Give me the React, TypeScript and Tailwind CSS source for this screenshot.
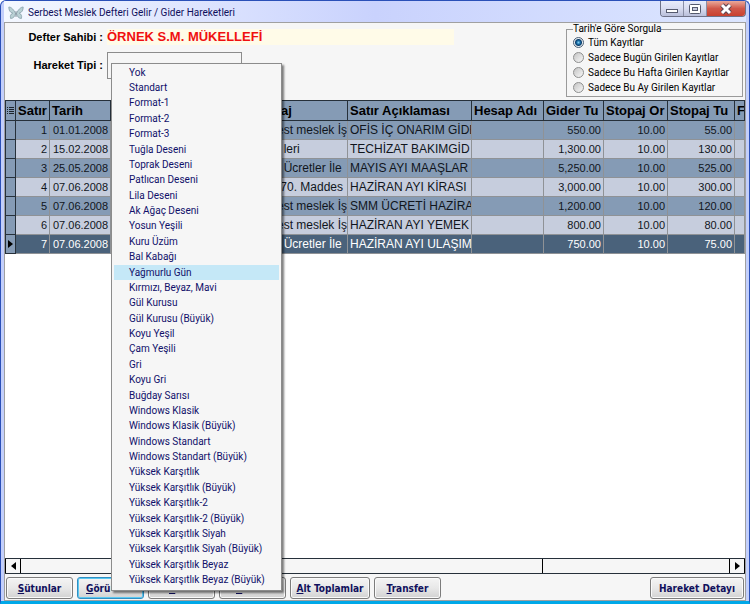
import { ReactNode } from 'react';
import clsx from 'clsx';

const themes = [
  'Yok', 'Standart', 'Format-1', 'Format-2', 'Format-3', 'Tuğla Deseni', 'Toprak Deseni', 'Patlıcan Deseni',
  'Lila Deseni', 'Ak Ağaç Deseni', 'Yosun Yeşili', 'Kuru Üzüm', 'Bal Kabağı', 'Yağmurlu Gün',
  'Kırmızı, Beyaz, Mavi', 'Gül Kurusu', 'Gül Kurusu (Büyük)', 'Koyu Yeşil', 'Çam Yeşili', 'Gri', 'Koyu Gri',
  'Buğday Sarısı', 'Windows Klasik', 'Windows Klasik (Büyük)', 'Windows Standart', 'Windows Standart (Büyük)',
  'Yüksek Karşıtlık', 'Yüksek Karşıtlık (Büyük)', 'Yüksek Karşıtlık-2', 'Yüksek Karşıtlık-2 (Büyük)',
  'Yüksek Karşıtlık Siyah', 'Yüksek Karşıtlık Siyah (Büyük)', 'Yüksek Karşıtlık Beyaz', 'Yüksek Karşıtlık Beyaz (Büyük)',
];

const rows = [
  { no: 1, date: '01.01.2008', kind: 'est meslek İş', note: 'OFİS İÇ ONARIM GİDE', amount: '550.00', rate: '10.00', tax: '55.00' },
  { no: 2, date: '15.02.2008', kind: '  leri', note: 'TECHİZAT BAKIMGİD', amount: '1,300.00', rate: '10.00', tax: '130.00' },
  { no: 3, date: '25.05.2008', kind: '  Ücretler İle', note: 'MAYIS AYI MAAŞLAR', amount: '5,250.00', rate: '10.00', tax: '525.00' },
  { no: 4, date: '07.06.2008', kind: ' 70. Maddes', note: 'HAZİRAN AYI KİRASI', amount: '3,000.00', rate: '10.00', tax: '300.00' },
  { no: 5, date: '07.06.2008', kind: 'est meslek İş', note: 'SMM ÜCRETİ HAZİRA', amount: '1,200.00', rate: '10.00', tax: '120.00' },
  { no: 6, date: '07.06.2008', kind: 'est meslek İş', note: 'HAZİRAN AYI YEMEK', amount: '800.00', rate: '10.00', tax: '80.00' },
  { no: 7, date: '07.06.2008', kind: '  Ücretler İle', note: 'HAZİRAN AYI ULAŞIM', amount: '750.00', rate: '10.00', tax: '75.00' },
];

const filters = ['Tüm Kayıtlar', 'Sadece Bugün Girilen Kayıtlar', 'Sadece Bu Hafta Girilen Kayıtlar', 'Sadece Bu Ay Girilen Kayıtlar'];

function TitleBar() {
  return (
    <header className="flex h-[21px] items-start justify-between bg-linear-to-r from-[#f4f8ff] via-[#c9d2fd] to-[#dce6ff] pl-1">
      <div className="flex items-center gap-1 pt-1">
        <svg viewBox="0 0 16 14" className="h-3.5 w-4" fill="#b9d0d4" stroke="#7f9aa3" strokeWidth="0.7">
          <path d="M7.500 7.500C6 4 3.500 1 .8 1c0 3 1 5.500 4 6.200C2.500 8 2 10 2.600 12.500c2.500 0 4.400-2 4.900-5Z" />
          <path d="M8.500 7.500C10 4 12.500 1 15.200 1c0 3-1 5.500-4 6.200 2.300.8 2.800 2.800 2.200 5.300-2.500 0-4.400-2-4.900-5Z" />
          <path d="M8 5v6" stroke="#5f6f78" />
        </svg>
        <h1 className="font-[Roboto,'Noto_Sans',sans-serif] text-[10px] leading-4 text-[#10105c]">Serbest Meslek Defteri Gelir / Gider Hareketleri</h1>
      </div>
      <div className="flex h-4 overflow-hidden rounded-b border border-t-0 border-[#6d7187]">
        <button aria-label="Simge durumuna küçült" className="flex w-[23px] items-center justify-center border-r border-[#8a8fa6] bg-linear-to-b from-[#e8ecfb] via-[#d8dcf0] to-[#b9bfda]">
          <svg viewBox="0 0 12 4" className="mt-1 h-1 w-3"><rect x=".5" y=".5" width="11" height="3" fill="#fff" stroke="#555a6e" /></svg>
        </button>
        <button aria-label="Ekranı kapla" className="flex w-[23px] items-center justify-center border-r border-[#8a8fa6] bg-linear-to-b from-[#e8ecfb] via-[#d8dcf0] to-[#b9bfda]">
          <svg viewBox="0 0 12 10" className="h-2.5 w-3" stroke="#555a6e"><rect x=".5" y=".5" width="11" height="9" rx="1" fill="#fff" /><rect x="3.500" y="3.500" width="5" height="3" fill="#c6cade" /></svg>
        </button>
        <button aria-label="Kapat" className="flex w-[38px] items-center justify-center bg-linear-to-b from-[#e9a99b] via-[#d0584a] to-[#c8402e]">
          <svg viewBox="0 0 14 12" className="h-3 w-3.5"><path d="M3 2 11 10M11 2 3 10" stroke="#5c4450" strokeWidth="5" /><path d="M3 2 11 10M11 2 3 10" stroke="#fff" strokeWidth="3" /></svg>
        </button>
      </div>
    </header>
  );
}

function FilterPanel() {
  return (
    <fieldset className="mr-0.5 h-[74px] w-[177px] min-w-0 border border-[#9a9a9a] pl-1.5 font-[Roboto,'Liberation_Sans',sans-serif] text-[10px] text-black">
      <legend className="h-3 leading-3">Tarih'e Göre Sorgula</legend>
      {filters.map((label, i) => (
        <label key={label} className="flex h-[15px] items-center gap-1 whitespace-nowrap">
          <input
            type="radio"
            name="range"
            defaultChecked={i === 0}
            className="size-[11px] appearance-none rounded-full border border-[#8e8f8f] bg-linear-to-br from-[#c4c4c4] to-[#f8f8f8] checked:border-[#4b5f75] checked:bg-[radial-gradient(circle,#7fd0f5_0,#14649c_2px,#0f3f6c_3px,#e8eef2_4px)]"
          />
          {label}
        </label>
      ))}
    </fieldset>
  );
}

const head = 'overflow-hidden whitespace-nowrap border-r border-y border-[#26303a] px-0.5 text-left text-[13px] font-bold';
const cell = 'overflow-hidden whitespace-nowrap border-r border-b border-[#8f9296]';
const num = 'pr-0.5 text-right text-[11px]';

function Ledger() {
  return (
    <table className="w-full table-fixed border-separate border-spacing-0 font-['Liberation_Sans',Arial,sans-serif] text-[12px] leading-4">
      <colgroup>
        <col className="w-[11px]" />
        <col className="w-[34px]" />
        <col className="w-[61px]" />
        <col className="w-[166px]" />
        <col className="w-[71px]" />
        <col className="w-[124px]" />
        <col className="w-[72px]" />
        <col className="w-[60px]" />
        <col className="w-[64px]" />
        <col className="w-[67px]" />
        <col />
      </colgroup>
      <thead>
        <tr className="h-[21px] bg-[#859bb5] text-black">
          <th className="border border-[#26303a] p-0">
            <svg viewBox="0 0 7 7" className="mx-auto size-[7px]" stroke="#1c242c"><path d="M0 .5h1M2 .5h5M0 2.500h1M2 2.500h5M0 4.500h1M2 4.500h5M0 6.500h1M2 6.500h5" /></svg>
          </th>
          <th className={head}>Satır</th>
          <th className={head}>Tarih</th>
          <th className={head}></th>
          <th className={clsx(head, 'pl-1')}>aj</th>
          <th className={head}>Satır Açıklaması</th>
          <th className={head}>Hesap Adı</th>
          <th className={head}>Gider Tu</th>
          <th className={head}>Stopaj Or</th>
          <th className={head}>Stopaj Tu</th>
          <th className={clsx(head, 'pr-0')}>F</th>
        </tr>
      </thead>
      <tbody>
        {rows.map((r) => (
          <tr key={r.no} className={clsx('h-[19px]', r.no === 7 ? 'bg-[#4a627b] text-white' : r.no % 2 ? 'bg-[#859bb5] text-[#10151c]' : 'bg-[#c6cddd] text-[#10151c]')}>
            <td className="border-x border-b border-[#26303a] bg-[#859bb5] p-0">
              {r.no === 7 && <svg viewBox="0 0 5 8" className="mx-auto h-2 w-[5px]"><path d="M0 0 5 4 0 8Z" /></svg>}
            </td>
            <td className={clsx(cell, num)}>{r.no}</td>
            <td className={clsx(cell, 'pl-[3px] text-[11px]')}>{r.date}</td>
            <td className={cell}></td>
            <td className={clsx(cell, 'whitespace-pre')}>{r.kind}</td>
            <td className={clsx(cell, 'pl-0.5')}>{r.note}</td>
            <td className={cell}></td>
            <td className={clsx(cell, num)}>{r.amount}</td>
            <td className={clsx(cell, num)}>{r.rate}</td>
            <td className={clsx(cell, num)}>{r.tax}</td>
            <td className={cell}></td>
          </tr>
        ))}
      </tbody>
    </table>
  );
}

function ToolButton({ children, className, focused }: { children?: ReactNode; className: string; focused?: boolean }) {
  return (
    <button
      className={clsx(
        'h-[22px] rounded-[3px] border bg-linear-to-b from-[#f4f4f4] via-[#e8e8e8] to-[#d2d2d2] text-[10px] font-bold whitespace-nowrap text-[#10105c]',
        focused ? 'border-[#2f8fc4] shadow-[inset_0_0_0_1px_#5cc8f0]' : 'border-[#7c7c7c] shadow-[inset_0_0_0_1px_#fafafa]',
        className,
      )}
    >
      {children}
    </button>
  );
}

function ThemeMenu() {
  return (
    <ul role="menu" className="absolute top-10 left-[106px] z-10 flex h-[528px] w-[171px] flex-col border border-[#8c8c8c] bg-[#f6f6f6] px-0.5 pt-px pb-0.5 shadow-[2px_2px_2px_rgba(0,0,0,0.5)]">
      {themes.map((name) => (
        <li
          key={name}
          role="menuitem"
          className={clsx(
            "flex flex-1 items-center pl-[15px] font-[Roboto,'Noto_Sans',sans-serif] text-[10px] leading-3 whitespace-nowrap text-[#10106a]",
            name === 'Yağmurlu Gün' && 'bg-[#c5e8f7]',
          )}
        >
          {name}
        </li>
      ))}
    </ul>
  );
}

export default function App() {
  return (
    <div className="flex h-screen flex-col overflow-hidden rounded-t-md border border-b-3 border-[#2a50b8] border-b-[#00a8e8] bg-[#c3cffb] px-[3px]">
      <TitleBar />
      <main className="relative flex min-h-0 flex-1 flex-col border border-[#a0a0a0] bg-[#f6f6f6]">
        <section className="flex h-[77px] shrink-0 items-start justify-between font-['Liberation_Sans',Arial,sans-serif]">
          <div className="flex grow flex-col gap-1.5 pt-1.5">
            <div className="flex items-center gap-1">
              <span className="w-[98px] text-right text-[11px] font-bold">Defter Sahibi :</span>
              <span className="h-4 w-[347px] bg-[#fffbe8] text-[13px] leading-4 font-bold text-[#f01010]">ÖRNEK S.M. MÜKELLEFİ</span>
            </div>
            <div className="flex items-center gap-1">
              <label htmlFor="tip" className="w-[98px] text-right text-[11px] font-bold">Hareket Tipi :</label>
              <input id="tip" className="h-[27px] w-[135px] border border-[#8c8c8c] bg-[#f6f6f6]" />
            </div>
          </div>
          <FilterPanel />
        </section>
        <section className="flex min-h-0 flex-1 flex-col bg-white">
          <div className="flex-1 overflow-hidden">
            <Ledger />
          </div>
          <div className="flex h-4 border-y border-[#26303a] bg-[#f6f6f6]">
            <button aria-label="Sola kaydır" className="flex w-4 items-center justify-center border-x border-black"><svg viewBox="0 0 5 8" className="h-2 w-[5px]"><path d="M5 0 0 4l5 4Z" /></svg></button>
            <div className="flex-[14] border-r border-black" />
            <div className="flex-[5]" />
            <button aria-label="Sağa kaydır" className="flex w-4 items-center justify-center border-x border-black"><svg viewBox="0 0 5 8" className="h-2 w-[5px]"><path d="M0 0 5 4 0 8Z" /></svg></button>
          </div>
        </section>
        <footer className="flex h-[26px] shrink-0 items-end gap-1 px-px pb-px font-['DejaVu_Sans_Condensed','Noto_Sans',sans-serif]">
          <ToolButton className="w-[67px]"><u>S</u>ütunlar</ToolButton>
          <ToolButton className="w-[67px] pl-2 text-left" focused><u>G</u>örü</ToolButton>
          <ToolButton className="w-[67px] pl-5 text-left"><u>&nbsp;&nbsp;</u></ToolButton>
          <ToolButton className="w-[67px] pl-4 text-left"><u>&nbsp;&nbsp;</u></ToolButton>
          <ToolButton className="w-20"><u>A</u>lt Toplamlar</ToolButton>
          <ToolButton className="w-[67px]"><u>T</u>ransfer</ToolButton>
          <ToolButton className="ml-auto w-[94px]">Hareket Detayı</ToolButton>
        </footer>
        <ThemeMenu />
      </main>
    </div>
  );
}
